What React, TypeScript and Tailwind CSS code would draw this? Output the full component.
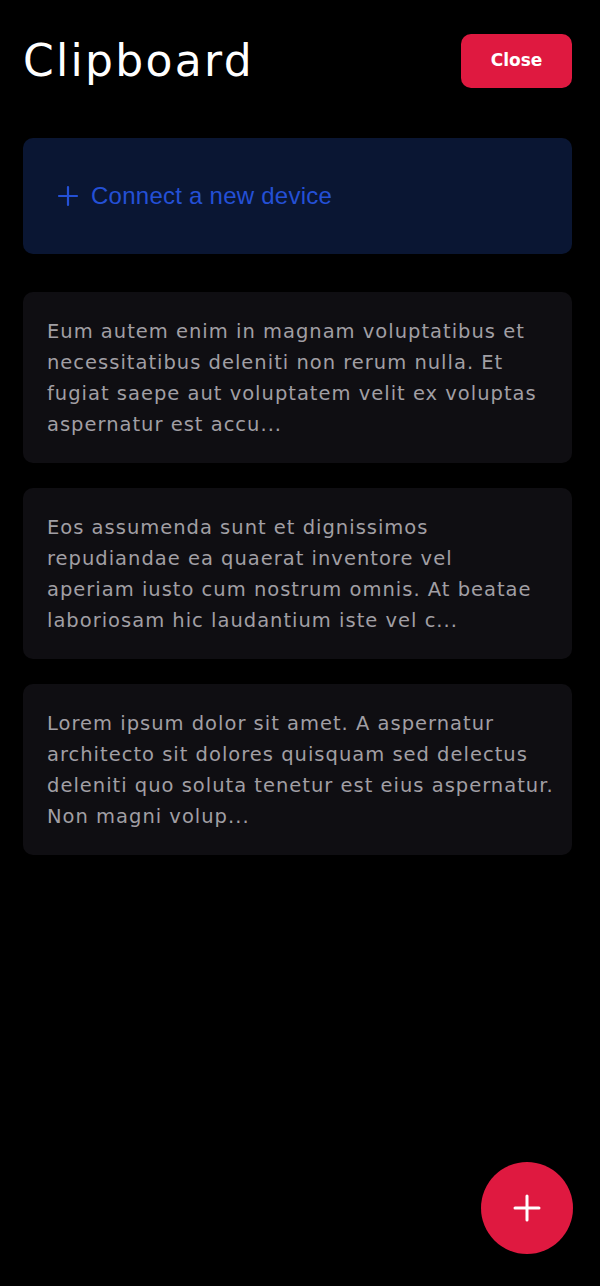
import React from "react";

const items = [
  [
    "Eum autem enim in magnam voluptatibus et",
    "necessitatibus deleniti non rerum nulla. Et",
    "fugiat saepe aut voluptatem velit ex voluptas",
    "aspernatur est accu...",
  ],
  [
    "Eos assumenda sunt et dignissimos",
    "repudiandae ea quaerat inventore vel",
    "aperiam iusto cum nostrum omnis. At beatae",
    "laboriosam hic laudantium iste vel c...",
  ],
  [
    "Lorem ipsum dolor sit amet. A aspernatur",
    "architecto sit dolores quisquam sed delectus",
    "deleniti quo soluta tenetur est eius aspernatur.",
    "Non magni volup...",
  ],
];

export default function App() {
  return (
    <div className="min-h-[1286px] bg-black pl-[23px] pr-[28px] pt-[34px]" style={{ fontFamily: '"DejaVu Sans", "Noto Sans", sans-serif' }}>
      <div className="flex items-center justify-between">
        <h1 className="text-[44px] leading-[54px] font-normal tracking-[2.3px] text-white">Clipboard</h1>
        <button className="h-[54px] w-[111px] rounded-[10px] bg-[#df1940] text-[17px] font-bold text-white">
          Close
        </button>
      </div>

      <button className="mt-[50px] flex h-[116px] w-full items-center gap-[12px] rounded-[10px] bg-[#0a1633] pl-[34px] text-[#2450d6]">
        <svg width="22" height="22" viewBox="0 0 22 22" fill="none" stroke="currentColor" strokeWidth="2.2" strokeLinecap="round">
          <path d="M11 2v18M2 11h18" />
        </svg>
        <span className="text-[24px] tracking-[0.25px]" style={{ fontFamily: '"Liberation Sans", Arial, sans-serif' }}>
          Connect a new device
        </span>
      </button>

      <div className="mt-[38px] flex flex-col gap-[25px]">
        {items.map((lines, i) => (
          <div key={i} className="h-[171px] rounded-[10px] bg-[#0f0e12] pl-[24px] pr-[4px] pt-[24px]">
            <p className="text-[19.5px] leading-[31px] tracking-[1px] text-[#a19fa4]">
              {lines.map((l, j) => (
                <span key={j} className="block whitespace-nowrap">
                  {l}
                </span>
              ))}
            </p>
          </div>
        ))}
      </div>

      <button className="fixed bottom-[32px] right-[27px] flex h-[92px] w-[92px] items-center justify-center rounded-full bg-[#df1940] text-white">
        <svg width="30" height="30" viewBox="0 0 30 30" fill="none" stroke="currentColor" strokeWidth="3" strokeLinecap="round">
          <path d="M15 3v24M3 15h24" />
        </svg>
      </button>
    </div>
  );
}
